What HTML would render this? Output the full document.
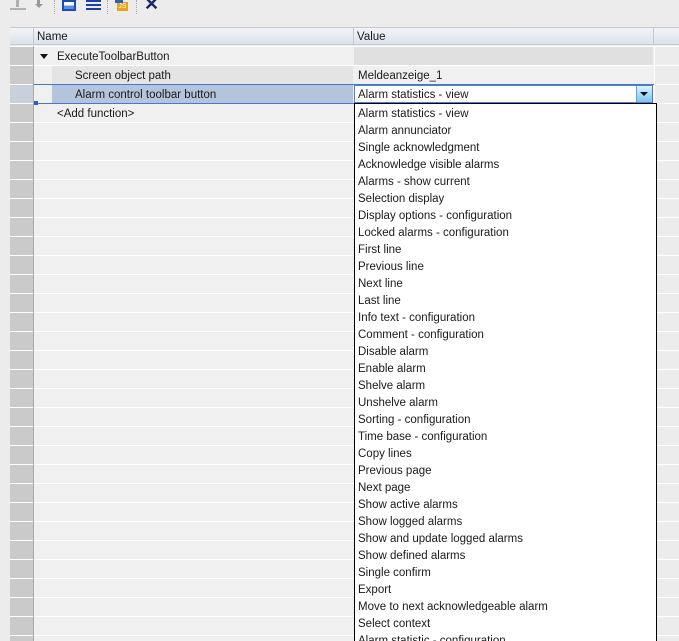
<!DOCTYPE html>
<html><head><style>
*{margin:0;padding:0;box-sizing:border-box}
html,body{width:679px;height:641px;overflow:hidden}
body{background:#ececec;font-family:"Liberation Sans",sans-serif;font-size:11.5px;color:#1a1a1a;position:relative}
.a{position:absolute}
.rows{background:repeating-linear-gradient(to bottom,#fff 0,#fff 1px,#f0f0f0 1px,#f0f0f0 19px)}
.gut{background:repeating-linear-gradient(to bottom,#fff 0,#fff 1px,#cacaca 1px,#cacaca 19px)}
.rt{background:repeating-linear-gradient(to bottom,#fff 0,#fff 1px,#ececec 1px,#ececec 19px)}
.t{position:absolute;white-space:nowrap;line-height:19px;margin-top:2px}
.pop div{height:17px;line-height:17px;padding-left:3px;white-space:nowrap}
</style></head><body>
<div class="a" style="left:10px;top:8px;width:16px;height:2px;background:#b0b0b0"></div>
<div class="a" style="left:16px;top:0;width:3px;height:7px;background:#b0b0b0"></div>
<div class="a" style="left:37px;top:0;width:3px;height:6px;background:#999"></div>
<div class="a" style="left:35px;top:4px;border-left:4px solid transparent;border-right:4px solid transparent;border-top:4px solid #999"></div>
<div class="a" style="left:54px;top:0;height:14px;border-left:1px dotted #aaa"></div>
<div class="a" style="left:62px;top:0;width:14px;height:11px;border:2px solid #1a4bb8;background:linear-gradient(#fff 50%,#5a8ee0 50%)"></div>
<div class="a" style="left:86px;top:0;width:15px;height:11px;background:repeating-linear-gradient(#1a3ea8 0 2px,transparent 2px 4px)"></div>
<div class="a" style="left:107px;top:0;height:14px;border-left:1px dotted #aaa"></div>
<div class="a" style="left:117px;top:2px;width:11px;height:9px;background:#e8a317;color:#fff;font-size:7px;line-height:9px;text-align:center">JS</div>
<div class="a" style="left:115px;top:0;width:8px;height:3px;background:#3060b0"></div>
<div class="a" style="left:136px;top:0;height:14px;border-left:1px dotted #aaa"></div>
<div class="a" style="left:144px;top:-6px;font-size:18px;color:#1a2a60;font-weight:bold">✕</div>
<div class="a" style="left:10px;top:27px;width:669px;height:1px;background:#c8c8c8"></div>
<div class="a" style="left:10px;top:28px;width:669px;height:17px;background:linear-gradient(#f2f4f8,#dde2ea);border-bottom:1px solid #c4c8d0"></div>
<div class="a" style="left:33px;top:28px;width:1px;height:17px;background:#c4c8d0"></div>
<div class="a" style="left:353px;top:28px;width:1px;height:17px;background:#c4c8d0"></div>
<div class="a" style="left:653px;top:28px;width:1px;height:17px;background:#c4c8d0"></div>
<div class="t" style="left:37px;top:26px">Name</div>
<div class="t" style="left:357px;top:26px">Value</div>
<div class="a gut" style="left:10px;top:46px;width:23px;height:595px"></div>
<div class="a" style="left:33px;top:46px;width:1px;height:595px;background:#a8a8a8"></div>
<div class="a rows" style="left:34px;top:46px;width:620px;height:595px"></div>
<div class="a rt" style="left:655px;top:46px;width:24px;height:595px"></div>
<div class="a" style="left:654px;top:46px;width:1px;height:595px;background:#fff"></div>
<div class="a" style="left:354px;top:47px;width:299px;height:18px;background:#e0e0e0"></div>
<div class="a" style="left:40px;top:54px;border-left:4px solid transparent;border-right:4px solid transparent;border-top:5px solid #111"></div>
<div class="t" style="left:57px;top:46px">ExecuteToolbarButton</div>
<div class="a" style="left:52px;top:66px;width:301px;height:18px;background:#e4e4e4"></div>
<div class="t" style="left:75px;top:65px">Screen object path</div>
<div class="t" style="left:358px;top:65px">Meldeanzeige_1</div>
<div class="a" style="left:10px;top:85px;width:23px;height:18px;background:#c8d0dc"></div>
<div class="a" style="left:34px;top:84px;width:620px;height:1px;background:#4a78c8"></div>
<div class="a" style="left:52px;top:85px;width:301px;height:18px;background:#b4c4dd"></div>
<div class="a" style="left:34px;top:103px;width:320px;height:1px;background:#4a78c8"></div>
<div class="a" style="left:34px;top:101px;width:4px;height:4px;background:#2a5ad0"></div>
<div class="t" style="left:75px;top:84px">Alarm control toolbar button</div>
<div class="a" style="left:354px;top:85px;width:299px;height:18px;background:#fff;border:1px solid #4a7ed0"></div>
<div class="t" style="left:358px;top:84px">Alarm statistics - view</div>
<div class="a" style="left:636px;top:86px;width:16px;height:16px;background:linear-gradient(#dff0ff,#7cc4f0);border-left:1px solid #6aa0d8"></div>
<div class="a" style="left:640px;top:92px;border-left:4px solid transparent;border-right:4px solid transparent;border-top:4px solid #111"></div>
<div class="t" style="left:57px;top:103px">&lt;Add function&gt;</div>
<div class="a pop" style="left:354px;top:103px;width:303px;height:560px;background:#fff;border:1px solid #000;padding-top:2px">
<div>Alarm statistics - view</div><div>Alarm annunciator</div><div>Single acknowledgment</div><div>Acknowledge visible alarms</div><div>Alarms - show current</div><div>Selection display</div><div>Display options - configuration</div><div>Locked alarms - configuration</div><div>First line</div><div>Previous line</div><div>Next line</div><div>Last line</div><div>Info text - configuration</div><div>Comment - configuration</div><div>Disable alarm</div><div>Enable alarm</div><div>Shelve alarm</div><div>Unshelve alarm</div><div>Sorting - configuration</div><div>Time base - configuration</div><div>Copy lines</div><div>Previous page</div><div>Next page</div><div>Show active alarms</div><div>Show logged alarms</div><div>Show and update logged alarms</div><div>Show defined alarms</div><div>Single confirm</div><div>Export</div><div>Move to next acknowledgeable alarm</div><div>Select context</div><div>Alarm statistic - configuration</div>
</div>
</body></html>
